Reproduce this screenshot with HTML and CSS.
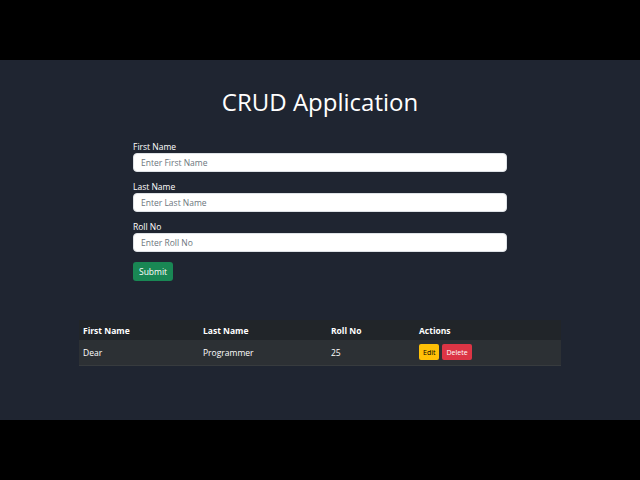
FILE: index.html
```html
<!DOCTYPE html>
<html>
<head>
<meta charset="utf-8">
<link rel="stylesheet" href="styles.css">
</head>
<body>
<div class="bar"></div>
<main class="app">
  <h1 class="title">CRUD Application</h1>
  <form class="form">
    <div class="group">
      <label class="label">First Name</label>
      <input class="input" type="text" placeholder="Enter First Name">
    </div>
    <div class="group">
      <label class="label">Last Name</label>
      <input class="input" type="text" placeholder="Enter Last Name">
    </div>
    <div class="group">
      <label class="label">Roll No</label>
      <input class="input" type="text" placeholder="Enter Roll No">
    </div>
    <button class="btn btn-submit" type="button">Submit</button>
  </form>
  <table class="table">
    <thead>
      <tr class="head-row">
        <th class="c1">First Name</th>
        <th class="c2">Last Name</th>
        <th class="c3">Roll No</th>
        <th class="c4">Actions</th>
      </tr>
    </thead>
    <tbody>
      <tr class="data-row">
        <td>Dear</td>
        <td>Programmer</td>
        <td>25</td>
        <td><button class="btn btn-edit" type="button">Edit</button><button class="btn btn-delete" type="button">Delete</button></td>
      </tr>
    </tbody>
  </table>
</main>
<div class="bar"></div>
</body>
</html>
```

FILE: styles.css
```css
html, body {
  margin: 0;
  padding: 0;
  background: #000;
  font-family: "Open Sans", "Noto Sans", sans-serif;
}
.bar {
  height: 60px;
  background: #000;
}
.app {
  height: 360px;
  box-sizing: border-box;
  background: #1f2531;
  color: #fff;
  padding-top: 25px;
  display: flex;
  flex-direction: column;
  align-items: center;
}
.title {
  margin: 0;
  font-weight: 400;
  font-size: 24px;
  line-height: 34px;
  height: 34px;
  text-align: center;
}
.form {
  width: 374px;
  margin-top: 22px;
  display: flex;
  flex-direction: column;
}
.group {
  display: flex;
  flex-direction: column;
  margin-bottom: 9px;
}
.label {
  font-size: 8.5px;
  line-height: 12px;
  height: 12px;
  color: #fff;
}
.input {
  box-sizing: border-box;
  height: 19px;
  border: 1px solid #dee2e6;
  border-radius: 4px;
  background: #fff;
  padding: 0 7px;
  font-family: inherit;
  font-size: 8.5px;
  color: #212529;
  outline: none;
}
.input::placeholder {
  color: #6c757d;
}
.btn {
  box-sizing: border-box;
  border: none;
  font-family: inherit;
  cursor: pointer;
}
.btn-submit {
  align-self: flex-start;
  height: 19px;
  margin-top: 1px;
  padding: 0 6px;
  border-radius: 3px;
  background: #198754;
  color: #fff;
  font-size: 8.5px;
}
.table {
  width: 482px;
  margin-top: 39px;
  border-collapse: collapse;
  font-size: 8.5px;
  color: #fff;
}
.head-row {
  height: 20px;
  background: #212529;
}
.head-row th {
  text-align: left;
  font-weight: 700;
  padding: 0 4px;
}
.c1 { width: 112px; }
.c2 { width: 120px; }
.c3 { width: 80px; }
.data-row {
  height: 25px;
  background: #2c3034;
  border-bottom: 1px solid #373b3e;
}
.data-row td {
  padding: 0 4px;
  vertical-align: middle;
}
.btn-edit, .btn-delete {
  height: 16px;
  padding: 0 4px;
  border-radius: 2px;
  font-size: 7px;
  vertical-align: middle;
}
.btn-edit {
  background: #ffc107;
  color: #000;
  margin-right: 3px;
}
.btn-delete {
  background: #dc3545;
  color: #fff;
}
```
